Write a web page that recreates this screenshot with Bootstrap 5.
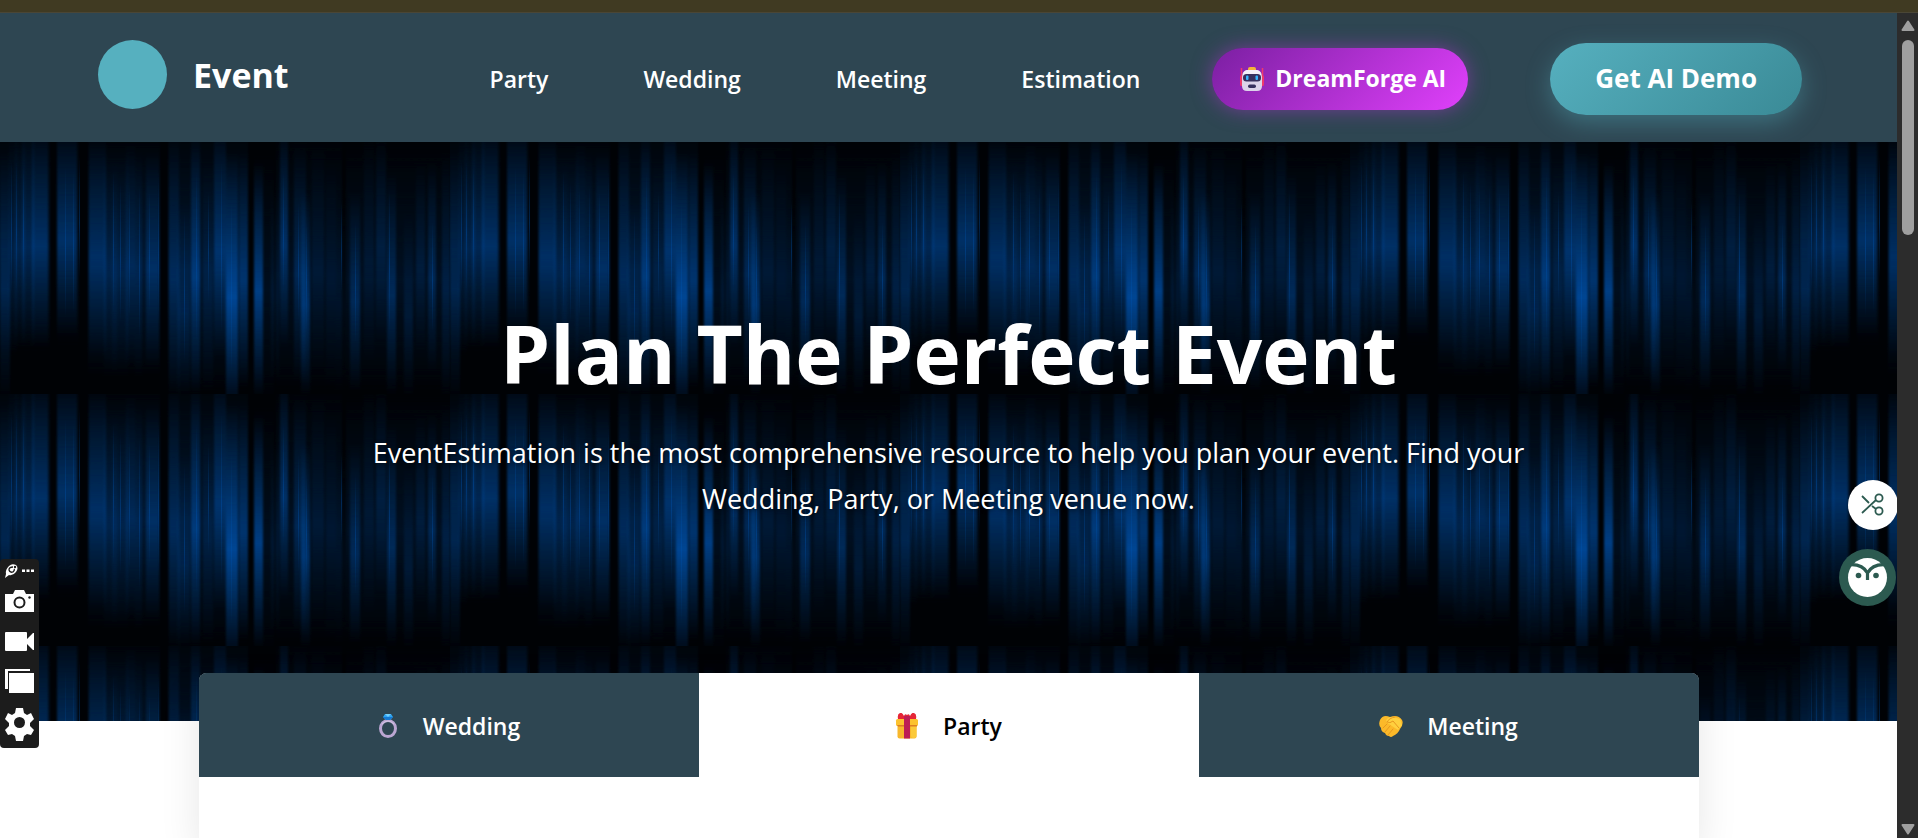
<!DOCTYPE html>
<html lang="en">
<head>
<meta charset="utf-8">
<meta name="viewport" content="width=device-width, initial-scale=1">
<title>Event</title>
<link href="https://cdn.jsdelivr.net/npm/bootstrap@5.3.0/dist/css/bootstrap.min.css" rel="stylesheet">
<style>
  :root { --slate: #2e4652; --teal: #56b0bf; }
  body { font-family: "Open Sans", "Noto Sans", sans-serif; color: #fff; background: #fff; }
  .top-strip { height: 13px; background: #403a22; border-bottom: 1px solid #4a4636; }
  .site-header { background: var(--slate); min-height: 129px; padding: 2px 95px 0 98px; }
  .brand { gap: 26px; padding-bottom: 8px; }
  .logo-dot { width: 69px; height: 69px; border-radius: 50%; background: var(--teal); }
  .logo-text { font-size: 34px; line-height: 48px; font-weight: 700; }
  .main-links { gap: 95px; margin-right: 72px; }
  .main-links a { font-size: 23px; line-height: 36px; font-weight: 600; color: #fff; text-decoration: none; }
  .forge-btn { height: 62px; padding: 0 22px 0 28px; border: 0; border-radius: 31px; gap: 11px; margin-right: 82px;
    font-size: 23px; font-weight: 700; color: #fff;
    background: linear-gradient(135deg, #7b1fa2, #e040fb); box-shadow: 0 0 20px rgba(187, 51, 220, .5); }
  .demo-btn { height: 72px; padding: 0 45px; border: 0; border-radius: 36px; font-size: 26px; font-weight: 700; color: #fff;
    background: linear-gradient(135deg, #56b0bf, #3a8a96); box-shadow: 0 8px 24px rgba(86, 176, 191, .4); }
  .hero { height: 579px; background: #000; padding-top: 161px; }
  .hero h1 { font-size: 80px; line-height: 100px; font-weight: 700; margin-bottom: 27px; }
  .hero p { font-size: 27px; line-height: 46px; max-width: 1200px; text-shadow: 1px 1px 4px rgba(0, 0, 0, .6); }
  .venue-panel { max-width: 1500px; margin-top: -48px; box-shadow: 0 16px 40px rgba(0, 0, 0, .1); border-radius: 8px 8px 0 0; }
  .venue-tabs { height: 104px; border-radius: 8px 8px 0 0; overflow: hidden; background: var(--slate); }
  .venue-tabs button { border: 0; gap: 24px; padding: 2px 0 0; background: var(--slate); color: #fff; font-size: 23px; font-weight: 600; }
  .venue-tabs button.active { background: #fff; color: #000; }
  .scroll-rail { width: 21px; background: #2c2c2c; padding: 7px 0 3px; }
  .scroll-thumb { width: 12px; height: 195px; border-radius: 6px; background: #9f9f9f; margin-top: 9px; }
  .capture-bar { left: 0; top: 546px; width: 39px; height: 189px; background: #1c1c1c; border-radius: 4px; }
  .capture-bar button, .float-btn { border: 0; padding: 0; background: none; line-height: 0; }
  .snip-clip { right: 0; top: 467px; width: 49px; height: 50px; overflow: hidden; }
  .snip-btn { width: 50px; height: 50px; border-radius: 50%; background: #fff; }
  .owl-btn { right: 1px; top: 536px; }
</style>
</head>
<body class="vh-100 overflow-hidden d-flex flex-column">
<div class="top-strip flex-shrink-0"></div>
<div class="d-flex flex-grow-1 overflow-hidden">
  <div class="page-view flex-grow-1 position-relative d-flex flex-column overflow-hidden">
    <header class="site-header d-flex align-items-center flex-shrink-0">
      <div class="brand d-flex align-items-center me-auto">
        <span class="logo-dot"></span>
        <span class="logo-text">Event</span>
      </div>
      <nav class="main-links d-flex">
        <a href="#party">Party</a>
        <a href="#wedding">Wedding</a>
        <a href="#meeting">Meeting</a>
        <a href="#estimation">Estimation</a>
      </nav>
      <button type="button" class="forge-btn d-flex align-items-center">
        <svg width="24" height="24" viewBox="0 0 24 24" aria-hidden="true">
          <path d="M1.500 1v18M22.500 1v18" stroke="#f0396b" stroke-width="1.500"/>
          <rect x="0" y="8" width="4" height="11" rx="2" fill="#f0396b"/><rect x="20" y="8" width="4" height="11" rx="2" fill="#f0396b"/>
          <rect x="8" y="0" width="8" height="5" rx="2" fill="#f3b53a"/>
          <path d="M7 3h10q5 1 5 7v9q0 5-5 5H7q-5 0-5-5v-9q0-6 5-7z" fill="#dcd3ea"/>
          <path d="M7 3h10q4 1 4 5H3q0-4 4-5z" fill="#f5f0fa"/>
          <rect x="3" y="7" width="18" height="7.500" rx="3.500" fill="#37305e"/>
          <rect x="6" y="8.500" width="2.500" height="4.500" rx="1" fill="#35b4ff"/><rect x="15.500" y="8.500" width="2.500" height="4.500" rx="1" fill="#35b4ff"/>
          <rect x="8" y="17.500" width="8" height="3.500" rx="1.700" fill="#37305e"/>
        </svg>
        <span>DreamForge AI</span>
      </button>
      <button type="button" class="demo-btn">Get AI Demo</button>
    </header>

    <section class="hero position-relative flex-shrink-0 text-center">
      <svg class="position-absolute top-0 start-0 w-100 h-100" aria-hidden="true">
        <defs>
          <linearGradient id="fold" x1="0" y1="0" x2="0" y2="1">
            <stop offset="0" stop-color="#004ea8" stop-opacity="0"/>
            <stop offset=".25" stop-color="#004ea0" stop-opacity=".5"/>
            <stop offset=".55" stop-color="#0052ae"/>
            <stop offset=".8" stop-color="#004ea0" stop-opacity=".45"/>
            <stop offset="1" stop-color="#004ea8" stop-opacity="0"/>
          </linearGradient>
          <filter id="soft" x="-5%" y="0" width="110%" height="100%"><feGaussianBlur stdDeviation="1.3 0"/></filter>
          <pattern id="curtain" width="450" height="252" patternUnits="userSpaceOnUse">
            <rect width="450" height="252" fill="#000205"/>
            <g id="folds" filter="url(#soft)"></g>
            <g id="threads"></g>
          </pattern>
        </defs>
        <rect width="100%" height="100%" fill="url(#curtain)"/>
      </svg>
      <div class="position-relative">
        <h1>Plan The Perfect Event</h1>
        <p class="mx-auto mb-0">EventEstimation is the most comprehensive resource to help you plan your event. Find your<br>Wedding, Party, or Meeting venue now.</p>
      </div>
    </section>

    <main class="venue-panel w-100 mx-auto bg-white flex-grow-1 position-relative">
      <div class="venue-tabs d-flex" role="tablist">
        <button type="button" role="tab" class="flex-fill w-100 d-flex align-items-center justify-content-center">
          <svg width="22" height="24" viewBox="0 0 22 24" aria-hidden="true">
            <ellipse cx="11" cy="14.500" rx="7.500" ry="8" fill="none" stroke="#bba6d2" stroke-width="3"/>
            <path d="M5 10q6-6 12 0" fill="none" stroke="#d4c6e4" stroke-width="1"/>
            <path d="M8 0h6l2 3-3 3H9L6 3z" fill="#2fa5f2"/><path d="M8 0h6l-3 3z" fill="#72d0ff"/><path d="M6 3h10l-3 3H9z" fill="#1579d3"/>
          </svg><span>Wedding</span>
        </button>
        <button type="button" role="tab" aria-selected="true" class="active flex-fill w-100 d-flex align-items-center justify-content-center">
          <svg width="24" height="26" viewBox="0 0 24 26" aria-hidden="true">
            <rect x="2.500" y="9" width="19" height="16.500" rx="2" fill="#f8b72c"/>
            <rect x="16" y="10" width="5.500" height="15" rx="2" fill="#fbc93a"/>
            <rect x="1" y="6" width="22" height="7" rx="1.500" fill="#fcc22f"/>
            <path d="M2 12h20v1.500H3z" fill="#dc7e23"/>
            <path d="M12 6Q8 6 3 6 2 1 5 0q2-1 4 3 1-3 3-1 2-2 3 1 2-4 4-3 3 1 2 6z" fill="#e52637"/>
            <rect x="9" y="3" width="6" height="22.500" fill="#bd1d55"/>
          </svg><span>Party</span>
        </button>
        <button type="button" role="tab" class="flex-fill w-100 d-flex align-items-center justify-content-center">
          <svg width="24" height="24" viewBox="0 0 24 24" aria-hidden="true">
            <path d="M1 6Q4 0 11 3q8-3 12 3 2 4-2 9-2 5-7 7-2 2-4 0-3 0-4-3-4-1-4-5-3-3-1-8z" fill="#fcb929"/>
            <path d="M7 8Q7 3 14 3l7 2 2 6-4 5z" fill="#ffd03e"/>
            <path d="M8 8q2-4 8-5M8 8q3 2 6-1l6 7M4 14l4-4M6 18l5-6M9 21l5-6" fill="none" stroke="#e8981f" stroke-width="1" stroke-linecap="round"/>
          </svg><span>Meeting</span>
        </button>
      </div>
    </main>

    <div class="capture-bar position-absolute">
      <div class="d-flex flex-column align-items-center">
        <button type="button" aria-label="Capture tools">
          <svg width="39" height="189" viewBox="0 0 39 189">
            <g fill="#fff">
              <path d="M9 7q3-3 7-1 3 3 0 7-3 4-7 3l-4 3 1-4q-1-4 3-8z"/>
              <path d="M13 8q-4 0-4 3 1 3 4 2 2-2 1-3" fill="none" stroke="#1c1c1c" stroke-width="1.300"/>
              <circle cx="15" cy="8" r="1.200" fill="#1c1c1c"/>
              <path d="M22 10.500h3v2.500h-3zM26.500 10.500h3v2.500h-3zM31 10.500h3v2.500h-3z"/>
              <path d="M5 35h8l2-4h9l2 4h8v18H5z"/>
              <circle cx="19.500" cy="43.500" r="5" fill="none" stroke="#1c1c1c" stroke-width="2"/><circle cx="29.500" cy="38.500" r="1.200" fill="#1c1c1c"/>
              <path d="M6 73h20q1 0 1 1v6l6-6h1v17h-1l-6-6v6q0 1-1 1H6q-1 0-1-1V74q0-1 1-1z"/>
              <path d="M5 110h25v2H8v18H5z"/><path d="M9 114h25v20H9z"/>
              <path d="M16 149h7l1 5 3 2 4-2 3 6-4 4v3l4 4-3 5-4-1-3 2-1 5h-7l-1-5-3-2-4 1-3-5 4-4v-3l-4-4 3-6 4 2 3-2z"/>
              <circle cx="19.500" cy="163.500" r="5.500" fill="#1c1c1c"/>
            </g>
          </svg>
        </button>
      </div>
    </div>
    <div class="snip-clip position-absolute">
      <button type="button" class="float-btn snip-btn" aria-label="Snip">
        <svg width="50" height="50" viewBox="0 0 50 50" fill="none" stroke="#2c5a50" stroke-width="1.800">
          <path d="M14 33L28 20M14 16l7 7M24 26l4 3"/><circle cx="31" cy="18" r="3.600"/><circle cx="31" cy="31" r="3.600"/>
        </svg>
      </button>
    </div>
    <button type="button" class="float-btn owl-btn position-absolute" aria-label="Assistant">
      <svg width="57" height="57" viewBox="0 0 57 57">
        <circle cx="28.500" cy="28.500" r="28.500" fill="#2c5a50"/><circle cx="28.500" cy="28.500" r="19.500" fill="#fff"/>
        <path d="M8 16q15-2 20.500 8V31M49 16q-15-2-20.500 8" fill="none" stroke="#2c5a50" stroke-width="3.200"/>
        <circle cx="19.500" cy="26.500" r="2.800" fill="#2c5a50"/><circle cx="37" cy="26.500" r="2.800" fill="#2c5a50"/>
      </svg>
    </button>
  </div>

  <div class="scroll-rail flex-shrink-0 d-flex flex-column align-items-center">
    <svg width="14" height="11" viewBox="0 0 14 11" aria-hidden="true"><path d="M7 1.500L12.500 10h-11z" fill="#9f9f9f" stroke="#9f9f9f" stroke-width="2" stroke-linejoin="round"/></svg>
    <div class="scroll-thumb"></div>
    <svg class="mt-auto" width="14" height="11" viewBox="0 0 14 11" aria-hidden="true"><path d="M7 9.500L12.500 1h-11z" fill="#9f9f9f" stroke="#9f9f9f" stroke-width="2" stroke-linejoin="round"/></svg>
  </div>
</div>
<script src="https://cdn.jsdelivr.net/npm/bootstrap@5.3.0/dist/js/bootstrap.bundle.min.js"></script>
<script>
  // Curtain folds: x, width, top, height, strength. Wide washes first, then the narrow pleats.
  const folds = [
    [-4,54,-20,230,.22],[57,22,-20,225,.15],[88,72,-10,245,.28],[168,80,-20,270,.25],[254,20,10,250,.15],[276,66,-10,260,.17],[346,54,0,250,.17],[400,52,0,250,.17],
    [0,10,10,250,.35],[9,8,-10,225,.2],[15,10,-10,215,.25],[22,12,-20,225,.3],[32,16,-20,225,.45],[57,20,-20,215,.5],[89,17,-10,225,.4],[104,24,10,225,.2],
    [112,5,20,210,.15],[126,9,0,225,.3],[135,7,10,225,.25],[146,13,10,215,.4],[169,10,-10,270,.35],[178,12,60,200,.3],[191,9,-10,265,.6],[203,10,20,230,.2],
    [214,12,-20,235,.5],[226,12,10,265,.8],[239,9,10,235,.5],[254,9,20,235,.7],[271,8,50,190,.15],[280,8,-20,225,.5],
    [294,12,0,240,.35],[301,9,50,205,.5],[312,12,0,230,.15],[326,10,20,225,.12],[336,10,60,190,.1],[350,10,50,200,.4],
    [364,10,-10,230,.15],[376,10,-10,210,.25],[387,9,30,225,.4],[404,9,70,190,.2],[416,9,20,190,.2],[428,8,20,210,.35],[442,8,10,250,.25]
  ];
  const threads = [[11,20,130],[16,20,130],[23,25,120],[65,25,150],[73,30,140],[79,15,120],[113,30,140],[120,40,140],[129,45,130],[139,45,150],[149,50,120],[158,30,150],[184,70,150],[196,30,170],[208,50,110],[221,20,170],[231,60,170],[283,30,120],[298,60,120],[306,80,110],[341,60,90],[355,80,120],[389,50,140],[432,80,110]];
  const draw = (id, x, y, w, h, o) => {
    const r = document.createElementNS("http://www.w3.org/2000/svg", "rect");
    Object.entries({ x, y, width: w, height: h, opacity: o, fill: "url(#fold)" }).forEach(([k, v]) => r.setAttribute(k, v));
    document.getElementById(id).appendChild(r);
  };
  folds.forEach(([x, w, y, h, o]) => draw("folds", x, y, w, h, o));
  threads.forEach(([x, y, h]) => draw("threads", x, y, 1, h, .4));
</script>
</body>
</html>
